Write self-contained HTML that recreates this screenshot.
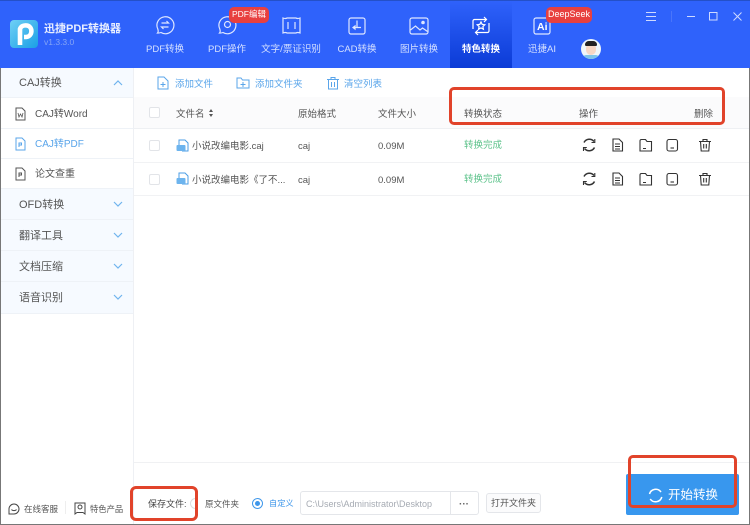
<!DOCTYPE html>
<html lang="zh"><head><meta charset="utf-8"><title>迅捷PDF转换器</title>
<style>
*{box-sizing:border-box;margin:0;padding:0}
html,body{width:750px;height:525px;overflow:hidden;background:#fff}
body{position:relative;font-family:"Liberation Sans","Noto Sans CJK SC",sans-serif;font-size:9.5px;color:#555}
.a{position:absolute}
.t{position:absolute;white-space:nowrap;line-height:14px}
.c{transform:translateX(-50%);text-align:center}
svg{position:absolute;overflow:visible;fill:none}
.nav{color:#d5e0ff;font-size:9.5px;top:43px}
.badge{position:absolute;background:#e8403f;color:#fff;font-size:9px;line-height:15px;height:16px;border-radius:5px;text-align:center}
.side{position:absolute;left:1px;width:132px;border-bottom:1px solid #eef2f7}
.g{background:#f6faff;height:31px}
.g span{position:absolute;left:18px;top:8px;font-size:11px;line-height:16px;color:#555}
.i{background:#fff;height:30px}
.i span{position:absolute;left:34px;top:8px;font-size:10px;line-height:15px;color:#555}
.cb{position:absolute;left:149px;width:11px;height:11px;border:1px solid #e2e4e8;border-radius:2px;background:#fff}
.red{position:absolute;border:3px solid #e1432a;border-radius:5px}
</style></head><body>
<div class="a" style="left:0;top:0;width:750px;height:68px;background:#2f62fb;border-top:1px solid #2450c8"></div>
<div class="a" style="left:450px;top:1px;width:62px;height:67px;background:linear-gradient(#2f62fb,#0b3bd6)"></div>

<div class="a" style="left:10px;top:20px;width:28px;height:28px;border-radius:4px;background:linear-gradient(135deg,#6fd0f5,#1a9fe6)"></div>
<svg style="left:10px;top:20px" width="28" height="28"><path d="M10 25V9c1-3 4-4 7-3.500 6 1 6 11-1 11.500h-2" stroke="#fff" stroke-width="4.600"/></svg>
<div class="t" style="left:44px;top:22px;color:#e8eeff;font-size:11px;font-weight:bold">迅捷PDF转换器</div>
<div class="t" style="left:44px;top:35px;color:#86a5f5;font-size:8.500px">v1.3.3.0</div>

<div class="t nav c" style="left:165px">PDF转换</div>
<div class="t nav c" style="left:227px">PDF操作</div>
<div class="t nav c" style="left:291px">文字/票证识别</div>
<div class="t nav c" style="left:357px">CAD转换</div>
<div class="t nav c" style="left:419px">图片转换</div>
<div class="t nav c" style="left:481px;color:#fff;font-weight:bold">特色转换</div>
<div class="t nav c" style="left:542px">迅捷AI</div>

<svg style="left:155px;top:15px" width="20" height="20" stroke="#dfe7ff" stroke-width="1.200"><path d="M2.500 18c1-1 .8-2.500.3-4A8.500 8.500 0 1 1 6 17.500c-1 .4-2.500.6-3.500.5z"/><path d="M6.500 8h7l-2-2M13.500 12h-7l2 2"/></svg>
<svg style="left:217px;top:15px" width="20" height="20" stroke="#dfe7ff" stroke-width="1.200"><path d="M2.500 18c1-1 .8-2.500.3-4A8.500 8.500 0 1 1 6 17.500c-1 .4-2.500.6-3.500.5z"/><circle cx="10.500" cy="9.500" r="3"/></svg>
<svg style="left:282px;top:17px" width="19" height="17" stroke="#dfe7ff" stroke-width="1.200"><path d="M1 1c2 .8 3 .8 4 0h9c1 .8 2 .8 4 0v15c-2-.8-3-.8-4 0H5c-1-.8-2-.8-4 0zM6 5v7M13 5v7"/></svg>
<svg style="left:348px;top:17px" width="18" height="18" stroke="#dfe7ff" stroke-width="1.200"><rect x="1" y="1" width="16" height="16" rx="2"/><path d="M9 3.500v7M5 10.500h8M5 10.500l2-1.500v3z"/></svg>
<svg style="left:409px;top:17px" width="20" height="18" stroke="#dfe7ff" stroke-width="1.200"><rect x="1" y="1" width="18" height="16" rx="2"/><path d="M1.500 13l5-4 4.500 4 2.500-2 5 3.500"/><circle cx="14" cy="5.500" r="1.200" fill="#dfe7ff"/></svg>
<svg style="left:471px;top:16px" width="20" height="20" stroke="#fff" stroke-width="1.200"><path d="M15 3.500H3.500a1.500 1.500 0 0 0-1.500 1.500V13M13 1l2.500 2.500L13 6M5 16.500h11.500a1.500 1.500 0 0 0 1.500-1.500V7M7 14l-2.500 2.500L7 19"/><path d="M10 6l1.200 2.400 2.600.4-1.900 1.800.5 2.600-2.400-1.300-2.400 1.300.5-2.600-1.900-1.800 2.600-.4z"/></svg>
<svg style="left:533px;top:17px" width="18" height="18" stroke="#dfe7ff" stroke-width="1.200"><rect x="1" y="1" width="16" height="16" rx="2"/></svg>
<div class="t" style="left:537px;top:20px;color:#fff;font-size:10.500px;font-weight:bold">Ai</div>

<div class="badge" style="left:229px;top:7px;width:40px;font-size:8.500px">PDF编辑</div>
<div class="badge" style="left:546px;top:7px;width:46px">DeepSeek</div>

<div class="a" style="left:581px;top:39px;width:20px;height:20px;border-radius:50%;background:#eef6fb;overflow:hidden">
 <div class="a" style="left:5px;top:4px;width:10px;height:12px;border-radius:5px;background:#f6d7c5"></div>
 <div class="a" style="left:4px;top:2px;width:12px;height:5px;border-radius:6px 6px 2px 2px;background:#222"></div>
 <div class="a" style="left:2px;top:16px;width:16px;height:6px;border-radius:6px;background:#7cc4ea"></div>
</div>

<svg style="left:646px;top:11px" width="72" height="12" stroke="#cfdaff" stroke-width="1"><path d="M0 1.500h10M0 5.500h10M0 9.500h10"/><path d="M25.500 0v11" stroke="#4a75fa"/><path d="M41 5.500h8"/><rect x="63.500" y="1.500" width="7.500" height="7.500"/></svg>
<svg style="left:733px;top:12px" width="10" height="10" stroke="#cfdaff" stroke-width="1"><path d="M.5.500l8 8M8.500.500l-8 8"/></svg>

<!-- sidebar -->
<div class="a" style="left:0;top:68px;width:1px;height:457px;background:#777"></div>
<div class="a" style="left:749px;top:68px;width:1px;height:457px;background:#777"></div>
<div class="a" style="left:0;top:524px;width:750px;height:1px;background:#777"></div>
<div class="a" style="left:133px;top:68px;width:1px;height:456px;background:#eef0f4"></div>

<div class="side g" style="top:68px;height:30px"><span style="top:7px">CAJ转换</span></div>
<div class="side i" style="top:98px;height:31px"><span style="top:9px">CAJ转Word</span></div>
<div class="side i" style="top:129px"><span>CAJ转PDF</span></div>
<div class="side i" style="top:159px"><span>论文查重</span></div>
<div class="side g" style="top:189px"><span>OFD转换</span></div>
<div class="side g" style="top:220px"><span>翻译工具</span></div>
<div class="side g" style="top:251px"><span>文档压缩</span></div>
<div class="side g" style="top:282px;height:32px"><span>语音识别</span></div>
<div class="t" style="left:35px;top:137px;font-size:10px;line-height:15px;color:#5aa5ea;background:#fff">CAJ转PDF</div>

<svg style="left:113px;top:80px" width="10" height="6" stroke="#6fb3ee" stroke-width="1.200"><path d="M1 5l4-4 4 4"/></svg>
<svg style="left:113px;top:201px" width="10" height="6" stroke="#6fb3ee" stroke-width="1.200"><path d="M1 1l4 4 4-4"/></svg>
<svg style="left:113px;top:232px" width="10" height="6" stroke="#6fb3ee" stroke-width="1.200"><path d="M1 1l4 4 4-4"/></svg>
<svg style="left:113px;top:263px" width="10" height="6" stroke="#6fb3ee" stroke-width="1.200"><path d="M1 1l4 4 4-4"/></svg>
<svg style="left:113px;top:294px" width="10" height="6" stroke="#6fb3ee" stroke-width="1.200"><path d="M1 1l4 4 4-4"/></svg>

<svg style="left:15px;top:107px" width="11" height="14" stroke="#555" stroke-width="1"><path d="M1 1h6l3 3v9H1z"/><path d="M3 6l1 4 1.500-3 1.500 3 1-4" stroke-width=".8"/></svg>
<svg style="left:15px;top:137px" width="11" height="14" stroke="#5aa5ea" stroke-width="1"><path d="M1 1h6l3 3v9H1zM4 10V6h2.500v2H4" /></svg>
<svg style="left:15px;top:167px" width="11" height="14" stroke="#555" stroke-width="1"><path d="M1 1h6l3 3v9H1zM4 10V6h2.500v2H4" /></svg>

<!-- bottom left -->
<svg style="left:8px;top:503px" width="12" height="12" stroke="#444" stroke-width="1"><path d="M1 11V6a5 5 0 1 1 5 5z"/><path d="M3.500 6.500c1 1.500 4 1.500 5 0"/></svg>
<div class="t" style="left:24px;top:502px;font-size:8.500px">在线客服</div>
<div class="a" style="left:65px;top:501px;width:1px;height:13px;background:#eee"></div>
<svg style="left:74px;top:502px" width="12" height="13" stroke="#444" stroke-width="1"><path d="M1 1h10v11l-2-1.500H3L1 12z"/><circle cx="6" cy="5" r="2"/></svg>
<div class="t" style="left:90px;top:502px;font-size:8.300px">特色产品</div>

<!-- toolbar -->
<svg style="left:157px;top:76px" width="12" height="14" stroke="#5aa5ea" stroke-width="1"><path d="M1 1h6l4 4v8H1zM6 6v5M3.500 8.500h5"/></svg>
<div class="t" style="left:175px;top:78px;color:#5aa5ea">添加文件</div>
<svg style="left:236px;top:77px" width="14" height="12" stroke="#5aa5ea" stroke-width="1"><path d="M1 1h4l1.500 2H13v8H1zM7 5v5M4.500 7.500h5"/></svg>
<div class="t" style="left:255px;top:78px;color:#5aa5ea">添加文件夹</div>
<svg style="left:327px;top:77px" width="12" height="13" stroke="#5aa5ea" stroke-width="1"><path d="M0 2.500h12M4 2.500V.500h4v2M1.500 2.500h9V12h-9zM4.500 5v5M7.500 5v5"/></svg>
<div class="t" style="left:344px;top:78px;color:#5aa5ea">清空列表</div>

<!-- table -->
<div class="a" style="left:134px;top:97px;width:615px;height:32px;background:#fbfbfc;border-bottom:1px solid #eef0f3"></div>
<div class="a" style="left:134px;top:162px;width:615px;height:1px;background:#f1f2f4"></div>
<div class="a" style="left:134px;top:195px;width:615px;height:1px;background:#f1f2f4"></div>
<div class="cb" style="top:107px"></div><div class="cb" style="top:140px"></div><div class="cb" style="top:174px"></div>

<div class="t" style="left:176px;top:108px">文件名</div>
<svg style="left:209px;top:109px" width="4" height="8"><path d="M2 0l2 3H0zM2 8L0 5h4z" fill="#555"/></svg>
<div class="t" style="left:298px;top:108px">原始格式</div>
<div class="t" style="left:378px;top:108px">文件大小</div>
<div class="t" style="left:464px;top:108px">转换状态</div>
<div class="t" style="left:579px;top:108px">操作</div>
<div class="t" style="left:694px;top:108px">删除</div>

<svg style="left:176px;top:139px" width="13" height="13" stroke="#4b9ee6" stroke-width="1"><path d="M3 6V1h6l3 3v8H6"/><rect x=".5" y="6" width="9" height="6" rx="1" fill="#6db4ee" stroke="none"/></svg>
<svg style="left:176px;top:172px" width="13" height="13" stroke="#4b9ee6" stroke-width="1"><path d="M3 6V1h6l3 3v8H6"/><rect x=".5" y="6" width="9" height="6" rx="1" fill="#6db4ee" stroke="none"/></svg>
<div class="t" style="left:192px;top:140px">小说改编电影.caj</div>
<div class="t" style="left:192px;top:174px">小说改编电影《了不...</div>
<div class="t" style="left:298px;top:140px">caj</div><div class="t" style="left:298px;top:174px">caj</div>
<div class="t" style="left:378px;top:140px">0.09M</div><div class="t" style="left:378px;top:174px">0.09M</div>
<div class="t" style="left:464px;top:139px;color:#5cc28a;font-size:9.500px">转换完成</div>
<div class="t" style="left:464px;top:173px;color:#5cc28a;font-size:9.500px">转换完成</div>

<!-- row icons -->
<svg style="left:582px;top:138px" width="142" height="14" stroke="#333" stroke-width="1.200">
<path d="M2 4.500A6 6 0 0 1 12 3.500M12.500 9.500A6 6 0 0 1 2.500 10.500" stroke-width="1.500"/><path d="M12.800 1v3.500H9.500M1.500 13V9.500h3.300" stroke-width="1.100"/>
<path d="M30 1h6l3.500 3.500V13H30zM32 6h5M32 8.500h5M32 11h5" transform="translate(1 0)" stroke-width="1.100"/>
<path d="M57 3a1.500 1.500 0 0 1 1.500-1.500h4l1.500 2h4.500V13H57zM60 10.500h3" transform="translate(1 0)" stroke-width="1.100"/>
<rect x="85" y="1.500" width="10.500" height="11.500" rx="2" stroke-width="1.100"/><path d="M88.500 10h3.500" stroke-width="1.100"/>
<path d="M116 3.500h12M120 3.500V1.500h4v2M117.500 3.500l.7 9.500h7.600l.7-9.500M120.700 6v4.500M123.300 6v4.500" transform="translate(1 0)" stroke-width="1.100"/>
</svg>
<svg style="left:582px;top:172px" width="142" height="14" stroke="#333" stroke-width="1.200">
<path d="M2 4.500A6 6 0 0 1 12 3.500M12.500 9.500A6 6 0 0 1 2.500 10.500" stroke-width="1.500"/><path d="M12.800 1v3.500H9.500M1.500 13V9.500h3.300" stroke-width="1.100"/>
<path d="M30 1h6l3.500 3.500V13H30zM32 6h5M32 8.500h5M32 11h5" transform="translate(1 0)" stroke-width="1.100"/>
<path d="M57 3a1.500 1.500 0 0 1 1.500-1.500h4l1.500 2h4.500V13H57zM60 10.500h3" transform="translate(1 0)" stroke-width="1.100"/>
<rect x="85" y="1.500" width="10.500" height="11.500" rx="2" stroke-width="1.100"/><path d="M88.500 10h3.500" stroke-width="1.100"/>
<path d="M116 3.500h12M120 3.500V1.500h4v2M117.500 3.500l.7 9.500h7.600l.7-9.500M120.700 6v4.500M123.300 6v4.500" transform="translate(1 0)" stroke-width="1.100"/>
</svg>

<!-- bottom bar -->
<div class="a" style="left:134px;top:462px;width:615px;height:1px;background:#f0f1f3"></div>
<div class="t" style="left:148px;top:497px;font-size:9px;color:#444">保存文件:</div>
<div class="a" style="left:190px;top:498px;width:8px;height:11px;border:1px solid #ddd;border-right:0;border-radius:6px 0 0 6px"></div>
<div class="t" style="left:205px;top:497px;font-size:8.500px">原文件夹</div>
<div class="a" style="left:252px;top:498px;width:11px;height:11px;border:1px solid #3f97ea;border-radius:50%"></div>
<div class="a" style="left:255px;top:501px;width:5px;height:5px;background:#3f97ea;border-radius:50%"></div>
<div class="t" style="left:269px;top:497px;font-size:8.200px;color:#3f97ea">自定义</div>
<div class="a" style="left:300px;top:491px;width:179px;height:24px;border:1px solid #e4e6ea;border-radius:3px;background:#fff"></div>
<div class="a" style="left:450px;top:492px;width:1px;height:22px;background:#e4e6ea"></div>
<div class="t" style="left:306px;top:497px;font-size:9px;color:#a6abb3">C:\Users\Administrator\Desktop</div>
<div class="t c" style="left:464px;top:498px;font-size:10px;color:#666;font-weight:bold">···</div>
<div class="a" style="left:486px;top:493px;width:55px;height:20px;border:1px solid #e4e6ea;border-radius:3px;background:#fbfbfc"></div>
<div class="t c" style="left:513.500px;top:496px;font-size:9px">打开文件夹</div>

<div class="a" style="left:626px;top:474px;width:113px;height:41px;background:#3897ee;border-radius:2px"></div>
<svg style="left:648px;top:488px" width="15" height="15" stroke="#fff" stroke-width="1.500"><path d="M1.500 6A6.500 6.500 0 0 1 13 4M13.800 9A6.500 6.500 0 0 1 2.200 11"/></svg>
<div class="t" style="left:668px;top:487px;font-size:12.500px;line-height:16px;color:#fff">开始转换</div>

<!-- red annotations -->
<div class="red" style="left:449px;top:87px;width:276px;height:38px"></div>
<div class="red" style="left:130px;top:486px;width:68px;height:35px;border-width:3.500px;border-radius:6px"></div>
<div class="red" style="left:628px;top:455px;width:109px;height:53px"></div>
</body></html>
